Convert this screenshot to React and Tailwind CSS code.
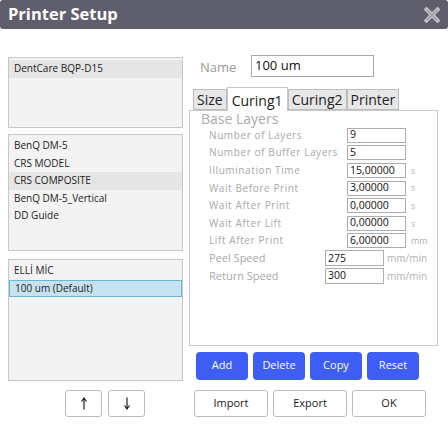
import React from 'react'

const profiles1 = ['DentCare BQP-D15']
const profiles2 = ['BenQ DM-5', 'CRS MODEL', 'CRS COMPOSITE', 'BenQ DM-5_Vertical', 'DD Guide']

const rows = [
  { label: 'Number of Layers', value: '9' },
  { label: 'Number of Buffer Layers', value: '5' },
  { label: 'Illumination Time', value: '15,00000', unit: 's' },
  { label: 'Wait Before Print', value: '3,00000', unit: 's' },
  { label: 'Wait After Print', value: '0,00000', unit: 's' },
  { label: 'Wait After Lift', value: '0,00000', unit: 's' },
  { label: 'Lift After Print', value: '6,00000', unit: 'mm' },
]

function ListBox({ items, height, selected, highlighted }) {
  return (
    <div className={`w-[175px] border border-[#c8c8c8] bg-[#f3f3f3] py-[2px] ${height}`}>
      {items.map((it) => (
        <div
          key={it}
          className={`flex h-[17.5px] items-center px-[5px] text-[10px] text-[#222] ${
            selected === it
              ? 'border border-[#6bb6d6] bg-[#c6e2ef]'
              : highlighted === it
              ? 'bg-[#e5e5e5]'
              : ''
          }`}
        >
          {it}
        </div>
      ))}
    </div>
  )
}

function Tab({ label, active }) {
  if (active) {
    return (
      <div className="relative z-10 -mb-px flex h-[24px] w-[61px] items-center justify-center border border-b-0 border-[#c8c8c8] bg-white pt-[2px] text-[14px] text-[#222]">
        {label}
      </div>
    )
  }
  return (
    <div className="mt-[2px] flex h-[21px] items-center justify-center border border-[#bdbdbd] bg-[#e7e7e7] px-[3px] text-[14px] text-[#222]">
      {label}
    </div>
  )
}

function Arrow({ down }) {
  return (
    <svg width="8" height="13" viewBox="0 0 8 13">
      {down ? (
        <path d="M4 0.5 V11.5 M1.5 8.5 L4 12 L6.5 8.5" stroke="#222" strokeWidth="1.2" fill="none" />
      ) : (
        <path d="M4 12.5 V1.5 M1.5 4.5 L4 1 L6.5 4.5" stroke="#222" strokeWidth="1.2" fill="none" />
      )}
    </svg>
  )
}

export default function App() {
  return (
    <div className="h-[435px] w-[448px] bg-white" style={{ fontFamily: '"Open Sans", "Noto Sans", sans-serif' }}>
      <div className="flex h-[29px] items-center justify-between rounded-[3px] bg-[#5f5e6c] pl-[8px] pr-[8px]">
        <span className="text-[16.5px] font-bold text-white">Printer Setup</span>
        <svg width="16" height="16" viewBox="0 0 16 16">
          <path d="M2.5 2.5 L13.5 13.5 M13.5 2.5 L2.5 13.5" stroke="#c6c6cb" strokeWidth="4" strokeLinecap="square" fill="none" />
          <path d="M2.5 2.5 L13.5 13.5 M13.5 2.5 L2.5 13.5" stroke="#9c9ba5" strokeWidth="1.5" fill="none" />
        </svg>
      </div>

      <div className="flex">
        <div className="flex w-[189px] flex-col pl-[8px] pt-[28px]">
          <ListBox items={profiles1} height="h-[71px]" highlighted="DentCare BQP-D15" />
          <div className="mt-[6px]">
            <ListBox items={profiles2} height="h-[117px]" highlighted="CRS COMPOSITE" />
          </div>
          <div className="mt-[8px]">
            <ListBox items={['ELLİ MİC', '100 um (Default)']} height="h-[122px]" selected="100 um (Default)" />
          </div>
          <div className="mt-[9px] flex gap-[6px] pl-[57px]">
            <button className="flex h-[27px] w-[37px] items-center justify-center rounded-[3px] border border-[#bcbcbc] bg-white">
              <Arrow />
            </button>
            <button className="flex h-[27px] w-[37px] items-center justify-center rounded-[3px] border border-[#bcbcbc] bg-white">
              <Arrow down />
            </button>
          </div>
        </div>

        <div className="flex w-[249px] flex-col">
          <div className="flex items-center pt-[25px]">
            <span className="ml-[11px] mt-[4px] w-[51px] text-[13px] text-[#9a9a9a]">Name</span>
            <div className="flex h-[22px] w-[123px] items-center border border-[#aaaaaa] bg-white px-[3px] text-[13px] text-[#111]">100 um</div>
          </div>
          <div className="mt-[8px] flex h-[24px] items-end pl-[4px]">
            <Tab label="Size" />
            <Tab label="Curing1" active />
            <Tab label="Curing2" />
            <Tab label="Printer" />
          </div>
          <div className="h-[236px] border border-[#c8c8c8] bg-white pl-[11px]">
            <div className="-mt-[1px] text-[14px] leading-[17px] text-[#ababab]">Base Layers</div>
            <div className="flex flex-col">
              {rows.map((r) => (
                <div key={r.label} className="flex h-[17.6px] items-center">
                  <span className="w-[146px] pl-[8px] text-[10px] tracking-[0.6px] text-[#a8a8a8]">{r.label}</span>
                  <div className="flex h-[15px] w-[59px] items-center border border-[#adadad] bg-white px-[2px] text-[10.5px] text-[#111]">{r.value}</div>
                  {r.unit && <span className="ml-[5px] text-[9px] text-[#b3b3b3]">{r.unit}</span>}
                </div>
              ))}
              {[
                { label: 'Peel Speed', value: '275' },
                { label: 'Return Speed', value: '300' },
              ].map((r) => (
                <div key={r.label} className="flex h-[17.6px] items-center">
                  <span className="w-[124px] pl-[8px] text-[11px] text-[#a8a8a8]">{r.label}</span>
                  <div className="flex h-[16px] w-[59px] items-center border border-[#adadad] bg-white px-[2px] text-[10.5px] text-[#111]">{r.value}</div>
                  <span className="ml-[3px] text-[10px] text-[#b3b3b3]">mm/min</span>
                </div>
              ))}
            </div>
          </div>
          <div className="mt-[6px] flex gap-[5px] pl-[7px]">
            {['Add', 'Delete', 'Copy', 'Reset'].map((b) => (
              <button key={b} className="flex h-[28px] w-[52px] items-center justify-center rounded-[4px] bg-[#3d5df5] text-[11px] text-white">{b}</button>
            ))}
          </div>
          <div className="mt-[10px] flex gap-[5px] pl-[5px]">
            {['Import', 'Export', 'OK'].map((b) => (
              <button key={b} className="flex h-[27px] w-[74px] items-center justify-center rounded-[3px] border border-[#bcbcbc] bg-white text-[11px] text-[#222]">{b}</button>
            ))}
          </div>
        </div>
      </div>
    </div>
  )
}
